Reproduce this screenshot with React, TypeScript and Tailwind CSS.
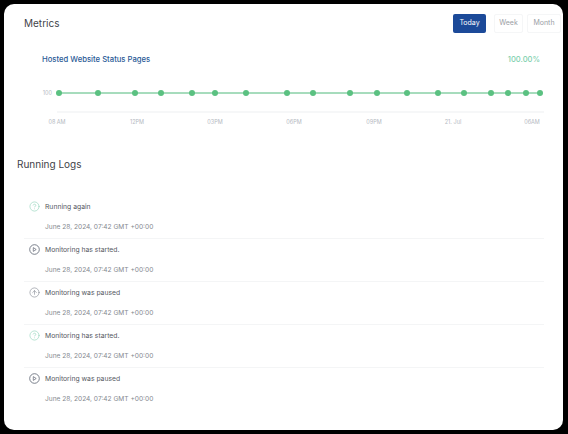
import { CircleHelp, CircleArrowUp } from "lucide-react";

const dots = [59, 98, 135, 161, 192, 215, 246, 287, 313, 350, 377, 407, 438, 464, 491, 508, 526, 540];

const axisLabels = [
  { x: 57, label: "08 AM" },
  { x: 137, label: "12PM" },
  { x: 215, label: "03PM" },
  { x: 294, label: "06PM" },
  { x: 374, label: "09PM" },
  { x: 453, label: "21. Jul" },
  { x: 532, label: "06AM" },
];

const logs = [
  { text: "Running again", kind: "help" },
  { text: "Monitoring has started.", kind: "play" },
  { text: "Monitoring was paused", kind: "up" },
  { text: "Monitoring has started.", kind: "help" },
  { text: "Monitoring was paused", kind: "play" },
];

function LogIcon({ kind }: { kind: string }) {
  if (kind === "help") {
    return <CircleHelp className="h-[11px] w-[11px] text-[#9ad8c0]" strokeWidth={1.5} />;
  }
  if (kind === "up") {
    return <CircleArrowUp className="h-[11px] w-[11px] text-[#7b818b]" strokeWidth={1.25} />;
  }
  return (
    <svg viewBox="0 0 11 11" className="h-[11px] w-[11px] text-[#5b6270]" fill="none" stroke="currentColor">
      <circle cx="5.5" cy="5.5" r="4.8" strokeWidth="0.8" />
      <path d="M4.3 3.6 7.2 5.5 4.3 7.4Z" strokeWidth="0.7" strokeLinejoin="round" />
    </svg>
  );
}

function Chart() {
  return (
    <svg viewBox="0 0 520 60" className="block h-[60px] w-[520px]">
      <text x="27" y="6" fontSize="5.5" fill="#b5b9bf" textAnchor="end" fontFamily="Inter, sans-serif">
        100
      </text>
      <line x1="34" y1="4" x2="515" y2="4" stroke="#4fb97a" strokeWidth="1" />
      {dots.map((x) => (
        <circle key={x} cx={x - 25} cy="4" r="3" fill="#5bc181" />
      ))}
      <line x1="32" y1="23" x2="519" y2="23" stroke="#e7e9ec" strokeWidth="0.75" />
      {axisLabels.map((a) => (
        <text
          key={a.label}
          x={a.x - 25}
          y="35"
          fontSize="5.5"
          fill="#b5b9bf"
          textAnchor="middle"
          fontFamily="Inter, sans-serif"
        >
          {a.label}
        </text>
      ))}
    </svg>
  );
}

export default function App() {
  return (
    <div className="h-[434px] w-[568px] overflow-hidden bg-black pb-1 pl-1 pr-[5px] pt-1 font-['Inter',sans-serif]">
      <div className="h-full rounded-[10px] bg-white">
        <div className="flex items-center justify-between pl-5 pr-[2px] pt-[9px]">
          <h1 className="pt-[1px] text-[10px] font-normal leading-[19px] text-[#3f4349]">Metrics</h1>
          <div className="flex">
            <button className="h-[19px] w-[33px] rounded-[2px] bg-[#1c4a99] text-[7px] text-white">Today</button>
            <button className="ml-2 h-[19px] w-[29px] rounded-[2px] border border-[#f5f6f7] text-[7px] text-[#9a9ea5]">
              Week
            </button>
            <button className="ml-1 h-[19px] w-[34px] rounded-[2px] border border-[#f5f6f7] text-[7px] text-[#9a9ea5]">
              Month
            </button>
          </div>
        </div>

        <section className="mt-[21px] pl-[21px] pr-[19px]">
          <div className="flex items-center justify-between pl-[17px]">
            <h2 className="text-[7.7px] font-medium leading-[12px] text-[#2a5a96]">Hosted Website Status Pages</h2>
            <span className="pr-[4px] text-[7.6px] font-medium leading-[12px] text-[#7fd0ae]">100.00%</span>
          </div>
          <div className="mt-[23px]">
            <Chart />
          </div>
        </section>

        <h2 className="mt-[7px] pl-[13px] text-[10px] font-normal leading-[16px] text-[#3f4349]">Running Logs</h2>

        <ul className="mt-[24px] pl-5 pr-[19px]">
          {logs.map((log, i) => (
            <li key={i} className="h-[43px] border-b border-[#f4f5f6] pt-[5px] last:border-b-0">
              <div className="flex items-center gap-[5px] pl-[5px]">
                <LogIcon kind={log.kind} />
                <span className="text-[6.8px] leading-[11px] text-[#55595f]">{log.text}</span>
              </div>
              <p className="mt-[10px] pl-[21px] text-[6.6px] leading-[10px] text-[#85898f]">
                June 28, 2024, 07:42 GMT +00:00
              </p>
            </li>
          ))}
        </ul>
      </div>
    </div>
  );
}
